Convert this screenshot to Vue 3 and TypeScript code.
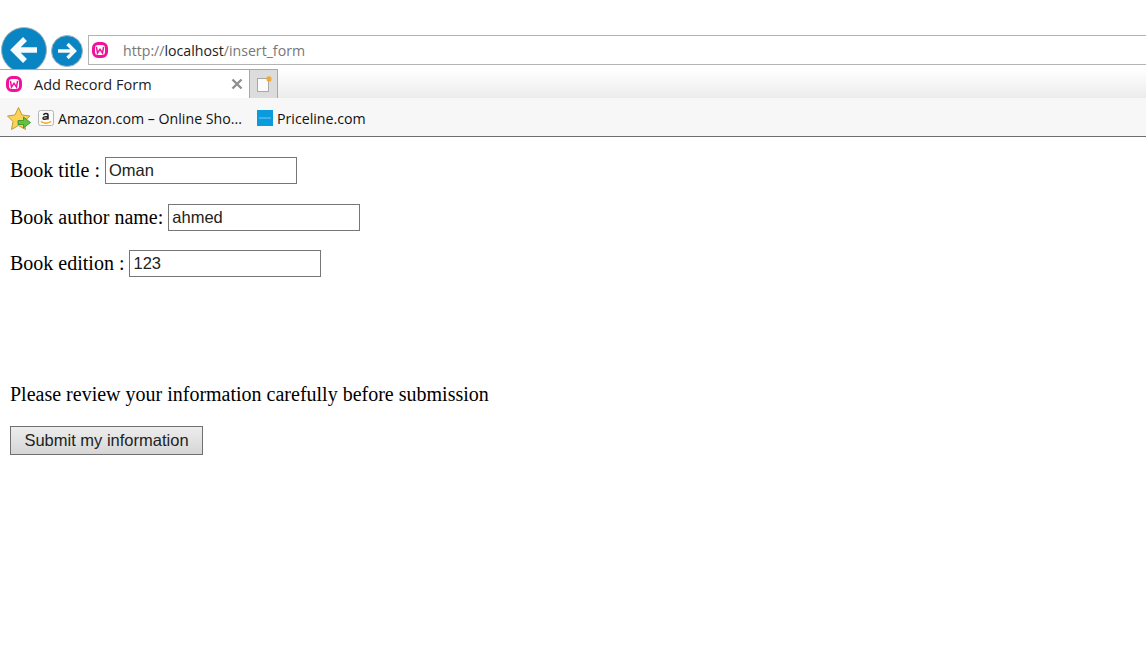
<script setup lang="ts">
const fields = [
  { label: 'Book title :', value: 'Oman' },
  { label: 'Book author name:', value: 'ahmed' },
  { label: 'Book edition :', value: '123' },
]
</script>

<template>
  <div class="page">
    <header class="chrome">
      <div class="nav-row">
        <div class="back">
          <svg viewBox="0 0 46 46" width="46" height="46">
            <circle cx="23" cy="23" r="22.5" fill="#0a85c4" stroke="#a9b4ba" stroke-width="1" />
            <path d="M36 23H14M24 12L13 23L24 34" fill="none" stroke="#f4fafd" stroke-width="5.500" />
          </svg>
        </div>
        <div class="forward">
          <svg viewBox="0 0 32 32" width="32" height="32">
            <circle cx="16" cy="16" r="15.500" fill="#0a85c4" stroke="#a9b4ba" stroke-width="1" />
            <path d="M7 16H23M16.500 9L23.500 16L16.500 23" fill="none" stroke="#f4fafd" stroke-width="3.400" />
          </svg>
        </div>
        <div class="address">
          <svg class="wamp" viewBox="0 0 16 16" width="16" height="16">
            <rect x="1.500" y="1.500" width="13" height="13" rx="4.500" fill="#fff" stroke="#f5109a" stroke-width="3" />
            <path d="M4.400 4.800L5.500 11L8 7.300L10.500 11L11.600 4.800" fill="none" stroke="#f5109a" stroke-width="1.500" />
          </svg>
          <span class="url">http://<b>localhost</b>/insert_form</span>
        </div>
      </div>

      <div class="tab-row">
        <div class="tab">
          <svg class="wamp" viewBox="0 0 16 16" width="16" height="16">
            <rect x="1.500" y="1.500" width="13" height="13" rx="4.500" fill="#fff" stroke="#f5109a" stroke-width="3" />
            <path d="M4.400 4.800L5.500 11L8 7.300L10.500 11L11.600 4.800" fill="none" stroke="#f5109a" stroke-width="1.500" />
          </svg>
          <span class="tab-title">Add Record Form</span>
          <svg class="close" viewBox="0 0 12 12" width="12" height="12">
            <path d="M1.500 1.500L10.500 10.500M10.500 1.500L1.500 10.500" stroke="#8f8f8f" stroke-width="2.400" />
          </svg>
        </div>
        <div class="new-tab">
          <svg viewBox="0 0 18 18" width="18" height="18">
            <rect x="2.500" y="3.500" width="11" height="13" fill="#fbfbfb" stroke="#a8a8a8" />
            <path d="M14 1V7M11 4H17M11.900 1.900L16.100 6.100M16.100 1.900L11.900 6.100" stroke="#f5a623" stroke-width="1.200" />
          </svg>
        </div>
      </div>

      <div class="fav-row">
        <svg class="star" viewBox="0 0 24 24" width="24" height="24">
          <path d="M11.500 .5L15 8L23 9L17 14.500L18.500 22.500L11.500 18.500L4.500 22.500L6 14.500L.5 9L8 8Z" fill="#fbd25a" stroke="#c89a2c" stroke-width="1" />
          <path d="M11 13.500H16.500V10L23.500 15.500L16.500 21V17.500H11Z" fill="#62c23f" stroke="#2f8f2a" stroke-width=".8" />
        </svg>
        <span class="fav-item amazon-item">
          <svg viewBox="0 0 16 16" width="16" height="16">
            <rect x=".5" y=".5" width="15" height="15" rx="2" fill="#fafafa" stroke="#b5b5b5" />
            <path d="M5.500 5.200C6 3 10 3 10 5.200V9.500M10 6.500C6 6.500 5 7.200 5 8.300C5 9.800 8.500 9.800 10 7.800" fill="none" stroke="#222" stroke-width="1.500" />
            <path d="M3 11.500C6 13.500 10 13.500 13 11.500" fill="none" stroke="#f39c12" stroke-width="1.400" />
          </svg>
          <span>Amazon.com – Online Sho...</span>
        </span>
        <span class="fav-item">
          <svg viewBox="0 0 16 16" width="16" height="16">
            <rect width="16" height="16" fill="#0a9bdc" />
            <path d="M2 8H14" stroke="#a9dcf3" stroke-width=".7" />
          </svg>
          <span>Priceline.com</span>
        </span>
      </div>
    </header>

    <form class="record-form" @submit.prevent>
      <p v-for="field in fields" :key="field.label" class="field">
        <label>{{ field.label }} <input type="text" :value="field.value" /></label>
      </p>
      <p class="notice">Please review your information carefully before submission</p>
      <button type="submit" class="submit">Submit my information</button>
    </form>
  </div>
</template>

<style>
html,
body {
  margin: 0;
  background: #fff;
}
</style>

<style scoped>
.page {
  width: 1146px;
  height: 655px;
  overflow: hidden;
  background: #fff;
  color: #000;
  font-family: "Liberation Serif", serif;
}

.chrome {
  height: 137px;
  box-sizing: border-box;
  border-bottom: 1px solid #6e6e6e;
  display: flex;
  flex-direction: column;
  font-family: "Open Sans", "Noto Sans", sans-serif;
}

.nav-row {
  height: 69px;
  flex: none;
  display: flex;
  align-items: flex-start;
  padding-left: 1px;
}

.back {
  margin-top: 27px;
  height: 46px;
  width: 46px;
  flex: none;
}

.forward {
  margin: 35px 0 0 4px;
  height: 32px;
  width: 32px;
  flex: none;
}

.address {
  margin: 35px 0 0 5px;
  flex: 1;
  height: 30px;
  box-sizing: border-box;
  border: 1px solid #b4b4b4;
  border-right: 0;
  display: flex;
  align-items: center;
  padding-left: 3px;
  background: #fff;
  font-size: 14.150px;
}

.url {
  margin-left: 15px;
  color: #777;
}

.url b {
  font-weight: 400;
  color: #222;
}

.tab-row {
  position: relative;
  height: 29px;
  flex: none;
  display: flex;
  background: linear-gradient(#fff, #ececec);
}

.tab {
  width: 250px;
  box-sizing: border-box;
  border-top: 1px solid #a8a8a8;
  border-right: 1px solid #a8a8a8;
  background: #fff;
  display: flex;
  align-items: center;
  padding-left: 6px;
  font-size: 14.500px;
  color: #222;
}

.tab-title {
  margin-left: 12px;
  flex: 1;
}

.close {
  margin-right: 6px;
}

.new-tab {
  width: 28px;
  box-sizing: border-box;
  border-top: 1px solid #a8a8a8;
  border-right: 1px solid #a8a8a8;
  background: #dcdcdc;
  display: flex;
  align-items: center;
  justify-content: center;
}

.fav-row {
  flex: 1;
  display: flex;
  align-items: center;
  background: #f7f7f7;
  padding-left: 7px;
  font-size: 14.200px;
  color: #111;
}

.star {
  flex: none;
  margin-top: 4px;
}

.fav-item {
  display: flex;
  align-items: center;
  gap: 4px;
  margin-left: 15px;
  padding-top: 2px;
}

.amazon-item {
  margin-left: 7px;
}

.record-form {
  padding: 20px 10px 0;
  font-size: 20px;
}

.field {
  margin: 0 0 19.500px;
  height: 27px;
  line-height: 27px;
}

.field input {
  width: 192px;
  height: 27px;
  box-sizing: border-box;
  border: 1px solid #767676;
  padding: 1px 3px;
  font: 16.500px "Liberation Sans", sans-serif;
  color: #222;
  vertical-align: 1px;
}

.notice {
  margin: 106px 0 20px;
  line-height: 23px;
}

.submit {
  display: block;
  width: 193px;
  height: 29px;
  box-sizing: border-box;
  border: 1px solid #707070;
  background: linear-gradient(#ededed, #d6d6d6);
  padding: 0;
  font: 16.500px "Liberation Sans", sans-serif;
  color: #222;
}
</style>
